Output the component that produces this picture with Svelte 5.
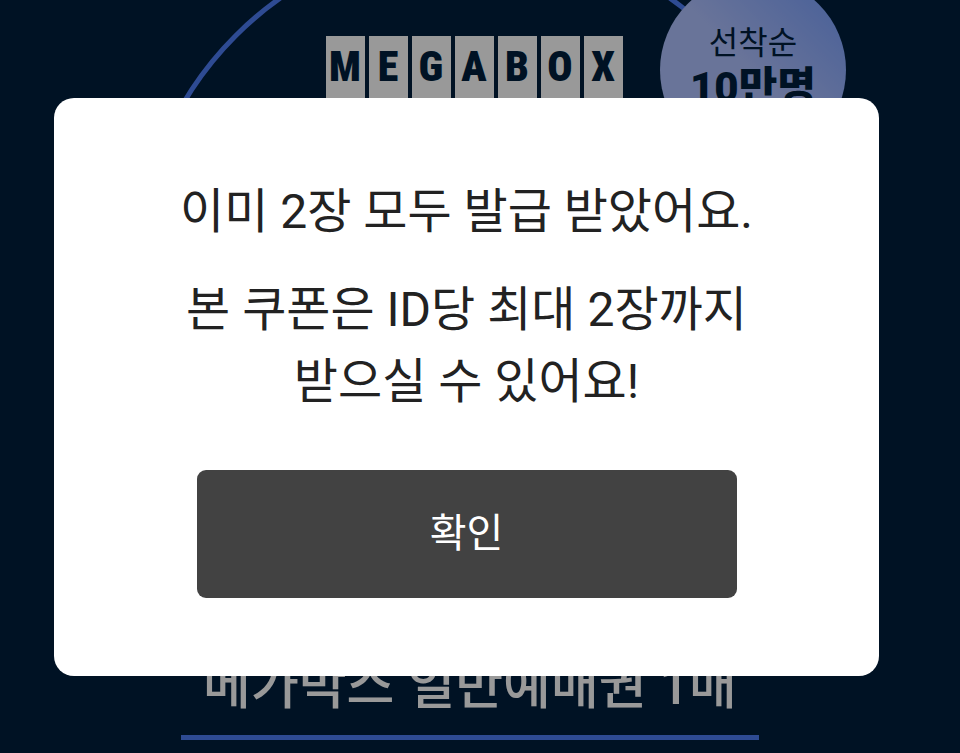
<script>
	let open = $state(true);

	const logo = "MEGABOX".split("");

	function close()
	{
		open = false;
	}
</script>

<main>
	<div class="ring"></div>

	<div class="logo">
		{#each logo as letter}
			<span class="tile">{letter}</span>
		{/each}
	</div>

	<div class="badge">
		<span class="badge-label">선착순</span>
		<strong class="badge-count">10만명</strong>
	</div>

	<h1>메가박스 일반예매권 1매</h1>
</main>

{#if open}
	<div class="overlay">
		<div class="modal" role="dialog" aria-modal="true" aria-labelledby="modal-title">
			<p id="modal-title">이미 2장 모두 발급 받았어요.</p>
			<p>본 쿠폰은 ID당 최대 2장까지<br>받으실 수 있어요!</p>
			<button type="button" onclick={close}>확인</button>
		</div>
	</div>
{/if}

<style>
	:global(body)
	{
		margin: 0;
		background: #001e3c;
		font-family: Roboto, "Noto Sans CJK KR", sans-serif;
	}

	main
	{
		position: relative;
		display: flex;
		flex-direction: column;
		align-items: center;
		justify-content: space-between;
		box-sizing: border-box;
		min-height: 100vh;
		padding: 36px 12px 13px 0;
		overflow: hidden;
		background: #001e3c;
	}

	.ring
	{
		position: absolute;
		top: -66px;
		left: calc(50% - 346px);
		box-sizing: border-box;
		width: 682px;
		height: 682px;
		border: 5px solid #4e7df5;
		border-radius: 50%;
	}

	.logo
	{
		display: flex;
		gap: 4px;
	}

	.tile
	{
		width: 39px;
		height: 72px;
		background: #fff;
		color: #001e3c;
		font-family: "Roboto Condensed", "Liberation Sans Narrow", Roboto, sans-serif;
		font-size: 42px;
		font-weight: 900;
		line-height: 62px;
		text-align: center;
	}

	.badge
	{
		position: absolute;
		top: -23px;
		left: calc(50% + 180px);
		display: flex;
		flex-direction: column;
		align-items: center;
		box-sizing: border-box;
		width: 186px;
		height: 186px;
		padding-top: 46px;
		border-radius: 50%;
		background: linear-gradient(to top right, #afc1ff 50%, #7fa4ff 90%);
		color: #001e3c;
	}

	.badge-label
	{
		font-size: 32px;
		line-height: 40px;
	}

	.badge-count
	{
		font-size: 42px;
		font-weight: 900;
		line-height: 50px;
	}

	h1
	{
		margin: 0 8px 0 0;
		padding: 0 22px 12px;
		border-bottom: 5px solid #4e7df5;
		color: #fff;
		font-size: 52px;
		font-weight: 500;
		line-height: 72px;
		white-space: nowrap;
	}

	.overlay
	{
		position: fixed;
		inset: 0;
		display: flex;
		align-items: flex-start;
		box-sizing: border-box;
		padding: 98px 81px 0 54px;
		background: rgba(0, 0, 0, 0.4);
	}

	.modal
	{
		flex: 1;
		box-sizing: border-box;
		padding: 78px 40px;
		border-radius: 20px;
		background: #fff;
		color: #222;
		text-align: center;
	}

	p
	{
		margin: 0 0 26px;
		font-size: 48px;
		line-height: 72px;
		white-space: nowrap;
	}

	button
	{
		width: 540px;
		max-width: 100%;
		height: 128px;
		margin-top: 26px;
		padding: 0 0 8px;
		border: none;
		border-radius: 9px;
		background: #424242;
		color: #fff;
		font-family: inherit;
		font-size: 40px;
		vertical-align: top;
		cursor: pointer;
	}
</style>
